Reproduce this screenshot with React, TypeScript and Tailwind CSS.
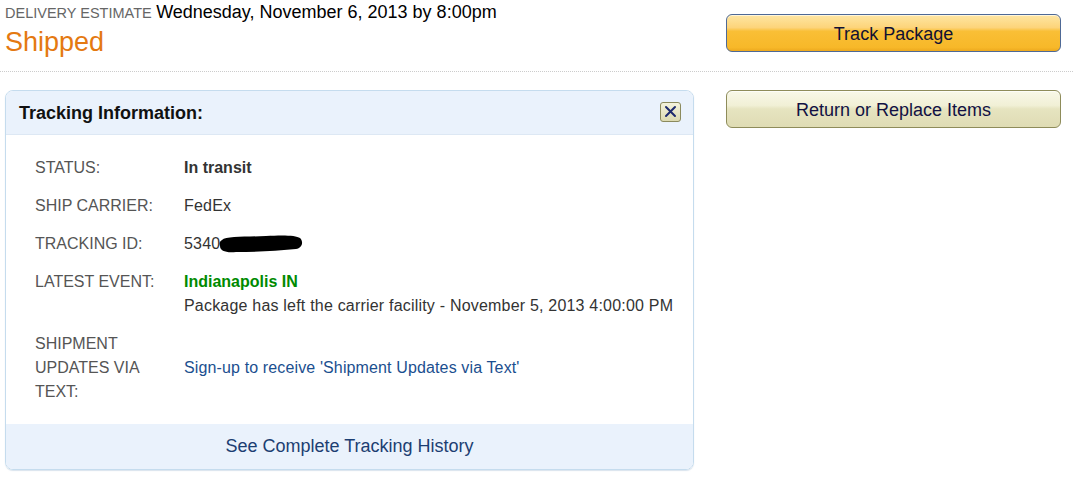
import React from "react";

const font = { fontFamily: '"Liberation Sans", Arial, sans-serif' };

function Row({ label, children, top }: { label: React.ReactNode; children: React.ReactNode; top?: string }) {
  return (
    <div className={`flex ${top ?? ""}`}>
      <div className="w-[149px] shrink-0 text-[#555555] leading-[24px]">{label}</div>
      <div className="leading-[24px] text-[#333333] tracking-[0.2px]">{children}</div>
    </div>
  );
}

export default function App() {
  return (
    <div className="w-[1073px] h-[478px] bg-white overflow-hidden text-[16px]" style={font}>
      {/* Top row */}
      <div className="flex h-[72px] border-b border-dotted border-[#cccccc]">
        <div className="w-[693px] pl-[5px] pt-[1px]">
          <div className="leading-[22px] whitespace-nowrap">
            <span className="text-[14.5px] text-[#666666]">DELIVERY ESTIMATE</span>{" "}
            <span className="text-[18px] text-black">Wednesday, November 6, 2013 by 8:00pm</span>
          </div>
          <div className="text-[27px] leading-[36px] text-[#e47911]">Shipped</div>
        </div>
        <div className="pl-[33px] pt-[14px]">
          <button className="w-[335px] h-[38px] rounded-[6px] border border-[#4e6996] bg-[linear-gradient(to_bottom,#fee6a3_0%,#fdd47a_35%,#f9bf36_45%,#f7b829_90%,#eda91e_100%)] shadow-[inset_0_1px_0_rgba(255,255,255,0.6)] text-[18px] text-[#111133] leading-none pt-[1px]">
            Track Package
          </button>
        </div>
      </div>

      {/* Second row */}
      <div className="flex pt-[18px]">
        <div className="pl-[5px]">
          <div className="w-[689px] h-[380px] rounded-[8px] border border-[#c5dcee] flex flex-col overflow-hidden shadow-[0_1px_1px_rgba(180,200,220,0.5)]">
            <div className="h-[44px] bg-[#eaf2fc] border-b border-[#dde8f4] flex items-center justify-between pl-[13px] pr-[12px]">
              <span className="text-[18px] font-bold text-[#111111] pt-[1px]">Tracking Information:</span>
              <div className="w-[21px] h-[20px] rounded-[3px] border border-[#8b8a5d] bg-[linear-gradient(to_bottom,#f4f3dd,#dcdab0)] flex items-center justify-center mt-[-2px]">
                <svg width="13" height="13" viewBox="0 0 13 13">
                  <path d="M2 2 L11 11 M11 2 L2 11" stroke="#1e2a6e" strokeWidth="2" strokeLinecap="round" />
                </svg>
              </div>
            </div>
            <div className="flex-1 bg-white pl-[29px] pt-[21px]">
              <Row label="STATUS:">
                <span className="font-bold text-[#333333] tracking-normal">In transit</span>
              </Row>
              <Row label="SHIP CARRIER:" top="mt-[14px]">
                FedEx
              </Row>
              <Row label="TRACKING ID:" top="mt-[14px]">
                <span className="inline-flex items-center">
                  5340
                  <svg width="88" height="24" viewBox="0 0 88 24" className="ml-[-4px]">
                    <path
                      d="M6 8 C10 4, 30 5, 50 4 C65 3, 80 3, 84 6 C88 10, 86 16, 80 17 C60 19, 40 20, 20 20 C10 21, 4 19, 4 14 C3 11, 4 9, 6 8 Z"
                      fill="#000000"
                    />
                  </svg>
                </span>
              </Row>
              <Row label="LATEST EVENT:" top="mt-[14px]">
                <div className="font-bold text-[#008a00] tracking-normal">Indianapolis IN</div>
                <div>Package has left the carrier facility - November 5, 2013 4:00:00 PM</div>
              </Row>
              <div className="flex mt-[14px]">
                <div className="w-[149px] shrink-0 text-[#555555] leading-[24px]">
                  SHIPMENT
                  <br />
                  UPDATES VIA
                  <br />
                  TEXT:
                </div>
                <div className="flex items-center">
                  <a className="text-[#1b4f8f] tracking-[0.13px]">Sign-up to receive 'Shipment Updates via Text'</a>
                </div>
              </div>
            </div>
            <div className="h-[45px] bg-[#eaf2fc] flex items-center justify-center">
              <a className="text-[18px] text-[#1c3e72]">See Complete Tracking History</a>
            </div>
          </div>
        </div>
        <div className="pl-[32px]">
          <button className="w-[335px] h-[38px] rounded-[6px] border border-[#8e8c5a] bg-[linear-gradient(to_bottom,#f8f8e8_0%,#f1f0d6_40%,#e6e4c0_50%,#dfdcb4_100%)] shadow-[inset_0_1px_0_rgba(255,255,255,0.7)] text-[18px] text-[#111144] leading-none pt-[1px]">
            Return or Replace Items
          </button>
        </div>
      </div>
    </div>
  );
}
